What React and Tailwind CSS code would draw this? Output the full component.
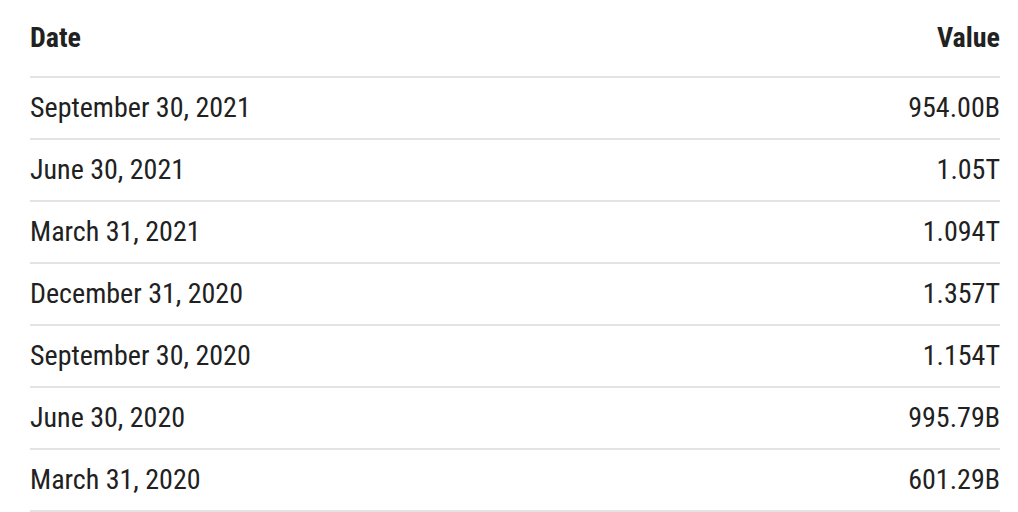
export default function App() {
  const rows = [
    ["September 30, 2021", "954.00B"],
    ["June 30, 2021", "1.05T"],
    ["March 31, 2021", "1.094T"],
    ["December 31, 2020", "1.357T"],
    ["September 30, 2020", "1.154T"],
    ["June 30, 2020", "995.79B"],
    ["March 31, 2020", "601.29B"],
  ];
  return (
    <div className="w-[1018px] h-[512px] bg-white overflow-hidden font-['Roboto_Condensed','Roboto',sans-serif] text-[#212121]">
      <div className="ml-[30px] w-[970px]">
        <div className="flex justify-between items-center h-[78px] border-b-2 border-[#e3e3e3] text-[28px] leading-none font-bold">
          <span>Date</span>
          <span>Value</span>
        </div>
        {rows.map(([d, v]) => (
          <div key={d} className="flex justify-between items-center h-[62px] border-b-2 border-[#e3e3e3] text-[28px] leading-none">
            <span>{d}</span>
            <span>{v}</span>
          </div>
        ))}
      </div>
    </div>
  );
}
